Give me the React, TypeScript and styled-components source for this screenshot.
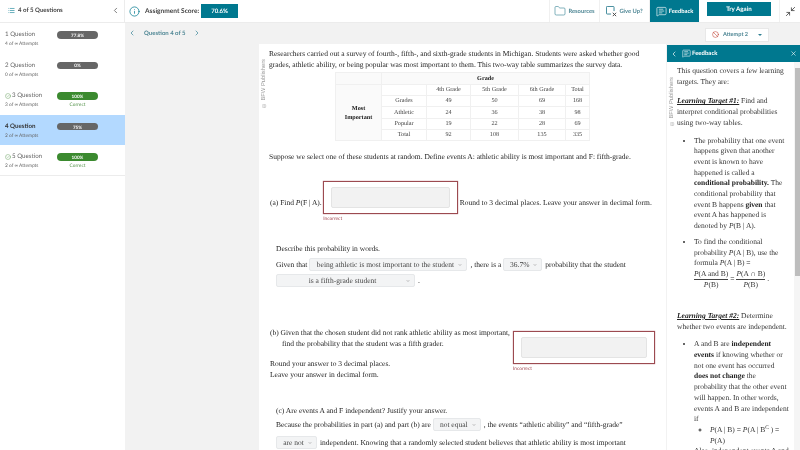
import React from 'react';
import styled, { createGlobalStyle } from 'styled-components';
import {
  List,
  ChevronLeft,
  ChevronRight,
  ChevronDown,
  Info,
  Folder,
  X,
  MessageSquareText,
  CircleCheck,
  Ban,
  Minimize2,
} from 'lucide-react';

const TEAL = '#00788f';
const SERIF = '"Liberation Serif", serif';
const SANS = 'Lato, sans-serif';

const GlobalStyle = createGlobalStyle`
  html, body {
    margin: 0;
    padding: 0;
    background: #f2f2f2;
    text-rendering: geometricPrecision;
  }
`;

const questions = [
  { name: '1 Question', attempts: '4 of ∞ Attempts', score: '77.8%' },
  { name: '2 Question', attempts: '0 of ∞ Attempts', score: '0%' },
  { name: '3 Question', attempts: '3 of ∞ Attempts', score: '100%', correct: true },
  { name: '4 Question', attempts: '2 of ∞ Attempts', score: '75%', active: true },
  { name: '5 Question', attempts: '2 of ∞ Attempts', score: '100%', correct: true },
];

const tableRows = [
  ['Grades', '49', '50', '69', '168'],
  ['Athletic', '24', '36', '38', '98'],
  ['Popular', '19', '22', '28', '69'],
  ['Total', '92', '108', '135', '335'],
];

const columnWidths = [46, 45, 44, 48, 47, 24];

const GiveUpIcon = () => (
  <svg width='11' height='11' viewBox='0 0 13 13' fill='none' stroke='#2f7f92' strokeWidth='1.1'>
    <path d='M6 9.5H1.5a1 1 0 0 1-1-1V1.5a1 1 0 0 1 1-1h7a1 1 0 0 1 1 1V6' />
    <path d='M8 8l4 4M12 8l-4 4' stroke='#444' />
  </svg>
);

const App = () => {
  return (
    <Page>
      <GlobalStyle />
      <TopBar>
        <SideHead>
          <List size={7} color={TEAL} strokeWidth={2} />
          <SideTitle>4 of 5 Questions</SideTitle>
          <ChevronLeft size={9} color='#555' />
        </SideHead>
        <ScoreArea>
          <Info size={11} color={TEAL} strokeWidth={1.6} />
          <ScoreLabel>Assignment Score:</ScoreLabel>
          <ScoreBox>70.6%</ScoreBox>
        </ScoreArea>
        <ToolButton>
          <Folder size={12} color='#2f7f92' strokeWidth={1.2} />
          Resources
        </ToolButton>
        <ToolButton>
          <GiveUpIcon />
          Give Up?
        </ToolButton>
        <ToolButton $active>
          <MessageSquareText size={11} color='#fff' strokeWidth={1.4} />
          Feedback
        </ToolButton>
        <TryAgain>Try Again</TryAgain>
        <ExpandBox>
          <Minimize2 size={11} color='#444' strokeWidth={1.8} />
        </ExpandBox>
      </TopBar>
      <Body>
        <Sidebar>
          {questions.map((q) => (
            <QuestionRow key={q.name} $active={q.active}>
              <div>
                <QuestionName $active={q.active}>
                  {q.correct && <CircleCheck size={6} color='#4f8f45' strokeWidth={1.6} />}
                  {q.name}
                </QuestionName>
                <Attempts>{q.attempts}</Attempts>
              </div>
              <div>
                <ScoreBar $correct={q.correct}>{q.score}</ScoreBar>
                {q.correct && <CorrectLabel>Correct</CorrectLabel>}
              </div>
            </QuestionRow>
          ))}
        </Sidebar>
        <Main>
          <SubBar>
            <Pager>
              <ChevronLeft size={8} color='#2f7f92' />
              <span>Question 4 of 5</span>
              <ChevronRight size={8} color='#2f7f92' />
            </Pager>
            <AttemptButton>
              <Ban size={7} color='#c0392b' strokeWidth={1.8} />
              <span>Attempt 2</span>
              <Caret />
            </AttemptButton>
          </SubBar>
          <ContentRow>
            <Card>
              <Publisher>© BFW Publishers</Publisher>
              <Intro>
                Researchers carried out a survey of fourth-, fifth-, and sixth-grade students in
                Michigan. Students were asked whether good grades, athletic ability, or being popular
                was most important to them. This two-way table summarizes the survey data.
              </Intro>
              <SurveyTable>
                <colgroup>
                  {columnWidths.map((w, i) => (
                    <col key={i} width={w} />
                  ))}
                </colgroup>
                <tbody>
                  <tr>
                    <HeadCell />
                    <HeadCell colSpan={5}>Grade</HeadCell>
                  </tr>
                  <tr>
                    <SideCell rowSpan={5}>
                      Most
                      <br />
                      Important
                    </SideCell>
                    <Cell />
                    <Cell>4th Grade</Cell>
                    <Cell>5th Grade</Cell>
                    <Cell>6th Grade</Cell>
                    <Cell>Total</Cell>
                  </tr>
                  {tableRows.map((row) => (
                    <tr key={row[0]}>
                      {row.map((value, i) => (
                        <Cell key={i}>{value}</Cell>
                      ))}
                    </tr>
                  ))}
                </tbody>
              </SurveyTable>
              <Suppose>
                Suppose we select one of these students at random. Define events A: athletic ability
                is most important and F: fifth-grade.
              </Suppose>
              <PartA>
                <PartAText>
                  (a) Find <i>P</i>(F | A).
                </PartAText>
                <AnswerBox $width={135}>
                  <AnswerInput />
                  <Incorrect>Incorrect</Incorrect>
                </AnswerBox>
                <PartAText>Round to 3 decimal places. Leave your answer in decimal form.</PartAText>
              </PartA>
              <Describe>Describe this probability in words.</Describe>
              <SentenceLine $top={4}>
                Given that
                <Dropdown $width={158}>being athletic is most important to the student</Dropdown>
                , there is a
                <Dropdown $width={39}>36.7%</Dropdown>
                probability that the student
              </SentenceLine>
              <SentenceLine $top={3}>
                <Dropdown $width={139} $first>
                  is a fifth-grade student
                </Dropdown>
                .
              </SentenceLine>
              <PartB>
                <PartBText>
                  <div>(b) Given that the chosen student did not rank athletic ability as most important,</div>
                  <Indented>find the probability that the student was a fifth grader.</Indented>
                  <RoundNote>
                    Round your answer to 3 decimal places.
                    <br />
                    Leave your answer in decimal form.
                  </RoundNote>
                </PartBText>
                <PartBAnswer>
                  <AnswerBox $width={142}>
                    <AnswerInput />
                    <Incorrect>Incorrect</Incorrect>
                  </AnswerBox>
                </PartBAnswer>
              </PartB>
              <PartC>(c) Are events A and F independent? Justify your answer.</PartC>
              <SentenceLine $top={2}>
                Because the probabilities in part (a) and part (b) are
                <Dropdown $width={48}>not equal</Dropdown>
                , the events “athletic ability” and “fifth-grade”
              </SentenceLine>
              <SentenceLine $top={5}>
                <Dropdown $width={41} $first>
                  are not
                </Dropdown>
                independent. Knowing that a randomly selected student believes that athletic ability
                is most important
              </SentenceLine>
            </Card>
            <FeedbackPanel>
              <FeedbackHead>
                <ChevronLeft size={8} color='#fff' />
                <MessageSquareText size={9} color='#fff' strokeWidth={1.5} />
                <FeedbackTitle>Feedback</FeedbackTitle>
                <X size={7} color='#fff' strokeWidth={2} />
              </FeedbackHead>
              <FeedbackBody>
                <PanelPublisher>© BFW Publishers</PanelPublisher>
                <Scrollbar>
                  <ScrollThumb />
                </Scrollbar>
                <FeedbackText>This question covers a few learning targets. They are:</FeedbackText>
                <TargetText>
                  <TargetName>Learning Target #1:</TargetName> Find and interpret conditional
                  probabilities using two-way tables.
                </TargetText>
                <BulletList>
                  <li>
                    The probability that one event happens given that another event is known to have
                    happened is called a <b>conditional probability.</b> The conditional probability
                    that event B happens <b>given</b> that event A has happened is denoted by{' '}
                    <i>P</i>(B | A).
                  </li>
                  <li>
                    To find the conditional probability <i>P</i>(A | B), use the formula{' '}
                    <i>P</i>(A | B) ={' '}
                    <FormulaLine>
                      <Fraction>
                        <Numerator>
                          <i>P</i>(A and B)
                        </Numerator>
                        <span>
                          <i>P</i>(B)
                        </span>
                      </Fraction>
                      =
                      <Fraction>
                        <Numerator>
                          <i>P</i>(A ∩ B)
                        </Numerator>
                        <span>
                          <i>P</i>(B)
                        </span>
                      </Fraction>
                      .
                    </FormulaLine>
                  </li>
                </BulletList>
                <SecondTarget>
                  <TargetName>Learning Target #2:</TargetName> Determine whether two events are
                  independent.
                </SecondTarget>
                <BulletList>
                  <li>
                    A and B are <b>independent events</b> if knowing whether or not one event has
                    occurred <b>does not change</b> the probability that the other event will happen.
                    In other words, events A and B are independent if
                    <NestedList>
                      <li>
                        <i>P</i>(A | B) = <i>P</i>(A | B<sup>C</sup> ) = <i>P</i>(A)
                      </li>
                    </NestedList>
                    Also, independent events A and B
                  </li>
                </BulletList>
              </FeedbackBody>
            </FeedbackPanel>
          </ContentRow>
        </Main>
      </Body>
    </Page>
  );
};

export default App;

const Page = styled.div`
  width: 800px;
  height: 450px;
  overflow: hidden;
  display: flex;
  flex-direction: column;
  background: #f2f2f2;
  font-family: ${SANS};
  color: #333;
  will-change: transform;
`;

const TopBar = styled.div`
  height: 23px;
  flex: none;
  display: flex;
  align-items: stretch;
  background: #fff;
  border-bottom: 1px solid #ececec;
  box-sizing: border-box;
`;

const SideHead = styled.div`
  width: 125px;
  flex: none;
  display: flex;
  align-items: center;
  padding: 0 4px 1px 8px;
  box-sizing: border-box;
  gap: 3px;
  border-right: 1px solid #ececec;
`;

const SideTitle = styled.span`
  flex: 1;
  font-size: 6.1px;
  font-weight: 700;
  color: #444;
`;

const ScoreArea = styled.div`
  flex: 1;
  display: flex;
  align-items: center;
  padding-left: 4px;
`;

const ScoreLabel = styled.span`
  margin-left: 5px;
  font-size: 6.6px;
  font-weight: 700;
  color: #444;
`;

const ScoreBox = styled.div`
  margin-left: 2px;
  width: 37px;
  height: 14px;
  background: ${TEAL};
  color: #fff;
  font-size: 6px;
  font-weight: 700;
  display: flex;
  align-items: center;
  justify-content: center;
`;

const ToolButton = styled.div<{ $active?: boolean }>`
  width: 50px;
  flex: none;
  display: flex;
  align-items: center;
  justify-content: center;
  gap: 2px;
  box-sizing: border-box;
  font-size: 5.8px;
  font-weight: 700;
  color: ${(p) => (p.$active ? '#fff' : '#4f8795')};
  background: ${(p) => (p.$active ? TEAL : '#fff')};
  border-left: 1px solid #f0f0f0;
`;

const TryAgain = styled.div`
  width: 64px;
  height: 14px;
  margin: 2px 8px 0 8px;
  flex: none;
  background: ${TEAL};
  color: #fff;
  font-size: 6.2px;
  font-weight: 700;
  display: flex;
  align-items: center;
  justify-content: center;
`;

const ExpandBox = styled.div`
  width: 21px;
  flex: none;
  box-sizing: border-box;
  display: flex;
  align-items: center;
  justify-content: center;
  border-left: 1px solid #f0f0f0;
`;

const Body = styled.div`
  flex: 1;
  min-height: 0;
  display: flex;
`;

const Sidebar = styled.div`
  width: 125px;
  flex: none;
  background: #fff;
`;

const QuestionRow = styled.div<{ $active?: boolean }>`
  height: 30.6px;
  box-sizing: border-box;
  padding: 8px 27px 0 5px;
  display: grid;
  grid-template-columns: 52px 41px;
  background: ${(p) => (p.$active ? '#b3d9ff' : '#fff')};
  &:last-child {
    border-bottom: 1px solid #ececec;
  }
`;

const QuestionName = styled.div<{ $active?: boolean }>`
  display: flex;
  align-items: center;
  gap: 1px;
  height: 7px;
  font-size: 6.2px;
  font-weight: ${(p) => (p.$active ? 700 : 400)};
  color: ${(p) => (p.$active ? '#333' : '#666')};
`;

const Attempts = styled.div`
  margin-top: 3px;
  font-size: 4.8px;
  line-height: 6px;
  color: #666;
`;

const ScoreBar = styled.div<{ $correct?: boolean }>`
  height: 7.5px;
  border-radius: 4px;
  background: ${(p) => (p.$correct ? '#3b8a2f' : '#666')};
  color: #fff;
  font-size: 4.6px;
  font-weight: 700;
  display: flex;
  align-items: center;
  justify-content: center;
`;

const CorrectLabel = styled.div`
  margin-top: 2px;
  text-align: center;
  font-size: 4.8px;
  line-height: 6px;
  color: #4f8f45;
`;

const Main = styled.div`
  flex: 1;
  min-width: 0;
  display: flex;
  flex-direction: column;
`;

const SubBar = styled.div`
  height: 21px;
  flex: none;
  display: flex;
  align-items: center;
  justify-content: space-between;
  padding: 0 31px 0 4px;
`;

const Pager = styled.div`
  display: flex;
  align-items: center;
  gap: 8px;
  font-size: 6px;
  font-weight: 700;
  color: #4f8795;
  margin-top: -1px;
  margin-left: -1px;
`;

const AttemptButton = styled.div`
  width: 64px;
  height: 14px;
  box-sizing: border-box;
  background: #fff;
  border: 1px solid #e8e8e8;
  display: flex;
  align-items: center;
  padding: 0 6px;
  gap: 4px;
  font-size: 5.6px;
  font-weight: 700;
  color: #4f8795;
  margin-top: 2px;
`;

const Caret = styled.span`
  margin-left: auto;
  width: 0;
  height: 0;
  border-left: 2px solid transparent;
  border-right: 2px solid transparent;
  border-top: 2.5px solid #2f7f92;
`;

const ContentRow = styled.div`
  flex: 1;
  min-height: 0;
  display: flex;
  padding-left: 134px;
  gap: 1px;
`;

const Card = styled.div`
  position: relative;
  width: 407px;
  flex: none;
  box-sizing: border-box;
  background: #fff;
  padding: 4px 4px 0 10px;
  overflow: hidden;
  font-family: ${SERIF};
  font-size: 7.5px;
  line-height: 11px;
  color: #222;
`;

const Publisher = styled.div`
  position: absolute;
  left: 2px;
  top: 15px;
  writing-mode: vertical-rl;
  transform: rotate(180deg);
  font-family: "Liberation Sans", sans-serif;
  font-size: 5.8px;
  line-height: 6px;
  color: #999;
`;

const Intro = styled.p`
  margin: 0;
  line-height: 11.2px;
`;

const SurveyTable = styled.table`
  margin: 2px 0 0 66px;
  width: 254px;
  height: 69px;
  border-collapse: collapse;
  table-layout: fixed;
  font-size: 6.2px;
  line-height: 8px;
  text-align: center;
  color: #444;
`;

const Cell = styled.td`
  border: 1px solid #f0f0f0;
  padding: 0;
  height: 10px;
`;

const HeadCell = styled.td`
  border: 1px solid #f0f0f0;
  padding: 0;
  height: 10px;
  background: #fafafa;
  font-weight: 700;
  color: #222;
`;

const SideCell = styled.td`
  border: 1px solid #f0f0f0;
  padding: 0;
  background: #fafafa;
  font-weight: 700;
  color: #222;
  line-height: 9px;
`;

const Suppose = styled.p`
  margin: 10px 0 0;
`;

const PartA = styled.div`
  margin: 19px 0 0 1px;
  display: flex;
  align-items: center;
  gap: 1.5px;
  white-space: nowrap;
`;

const PartAText = styled.span`
  padding-top: 9px;
`;

const AnswerBox = styled.div<{ $width: number }>`
  position: relative;
  width: ${(p) => p.$width}px;
  height: 33px;
  flex: none;
  box-sizing: border-box;
  border: 1px solid #9c4a50;
  box-shadow: 0 0 1px rgba(160, 70, 80, 0.8);
  display: flex;
  align-items: center;
  justify-content: center;
  padding: 0 7px;
`;

const AnswerInput = styled.div`
  flex: 1;
  height: 19px;
  background: #f2f2f2;
  border: 1px solid #e4e4e4;
  border-radius: 2px;
`;

const Incorrect = styled.div`
  position: absolute;
  left: -1px;
  top: 100%;
  margin-top: 3px;
  font-family: ${SANS};
  font-size: 4.8px;
  line-height: 6px;
  color: #a0454f;
`;

const Describe = styled.div`
  margin: 29px 0 0 7px;
`;

const SentenceLine = styled.div<{ $top: number }>`
  margin: ${(p) => p.$top}px 0 0 7px;
  display: flex;
  align-items: center;
  white-space: nowrap;
  height: 13px;
`;

const Dropdown = styled(({ children, className }: React.PropsWithChildren<{ className?: string }>) => (
  <span className={className}>
    <DropdownLabel>{children}</DropdownLabel>
    <ChevronDown size={4} color='#666' strokeWidth={2.5} />
  </span>
))<{ $width: number; $first?: boolean }>`
  width: ${(p) => p.$width}px;
  height: 13px;
  flex: none;
  box-sizing: border-box;
  margin: ${(p) => (p.$first ? '0 3px 0 0' : '0 3px 0 2px')};
  padding: 0 4px 0 2px;
  display: inline-flex;
  align-items: center;
  background: #f3f4f5;
  border: 1px solid #e6e8ea;
  border-radius: 2px;
  color: #444;
`;

const DropdownLabel = styled.span`
  flex: 1;
  text-align: center;
`;

const PartB = styled.div`
  margin: 40px 0 0 1px;
  display: flex;
  white-space: nowrap;
`;

const PartBText = styled.div`
  width: 241px;
  flex: none;
`;

const Indented = styled.div`
  padding-left: 12px;
`;

const RoundNote = styled.div`
  margin-top: 9px;
`;

const PartBAnswer = styled.div`
  padding-top: 4px;
  margin-left: 2px;
`;

const PartC = styled.div`
  margin: 25px 0 0 7px;
`;

const FeedbackPanel = styled.div`
  flex: 1;
  min-width: 0;
  margin-top: 1px;
  display: flex;
  flex-direction: column;
  background: #fff;
`;

const FeedbackHead = styled.div`
  height: 17px;
  flex: none;
  background: ${TEAL};
  display: flex;
  align-items: center;
  padding: 0 3px 0 3px;
  gap: 4px;
`;

const FeedbackTitle = styled.span`
  flex: 1;
  margin-left: -3px;
  font-size: 6px;
  font-weight: 700;
  color: #fff;
`;

const FeedbackBody = styled.div`
  position: relative;
  flex: 1;
  min-height: 0;
  overflow: hidden;
  padding: 4px 7px 0 10px;
  font-family: ${SERIF};
  font-size: 7.5px;
  line-height: 10.7px;
  color: #333;
  b {
    color: #222;
  }
`;

const PanelPublisher = styled.div`
  position: absolute;
  left: 2px;
  top: 15px;
  writing-mode: vertical-rl;
  transform: rotate(180deg);
  font-family: "Liberation Sans", sans-serif;
  font-size: 5.8px;
  line-height: 6px;
  color: #999;
`;

const Scrollbar = styled.div`
  position: absolute;
  right: 0;
  top: 0;
  bottom: 0;
  width: 6px;
  background: #f5f5f5;
`;

const ScrollThumb = styled.div`
  margin: 6px 0 0 1px;
  width: 5px;
  height: 208px;
  background: #bdbdbd;
`;

const FeedbackText = styled.p`
  margin: 0;
`;

const TargetName = styled.span`
  font-weight: 700;
  font-style: italic;
  text-decoration: underline;
  color: #222;
`;

const TargetText = styled.p`
  margin: 9px 0 0;
`;

const SecondTarget = styled.p`
  margin: 21px 0 0;
`;

const BulletList = styled.ul`
  margin: 7px 0 0;
  padding: 0 3px 0 17px;
  li + li {
    margin-top: 5px;
  }
`;

const NestedList = styled.ul`
  margin: 0;
  padding: 0 0 0 16px;
  list-style: circle;
  sup {
    font-size: 5.5px;
    line-height: 0;
  }
`;

const FormulaLine = styled.span`
  display: inline-flex;
  align-items: center;
  gap: 2px;
  white-space: nowrap;
  vertical-align: middle;
`;

const Fraction = styled.span`
  display: inline-flex;
  flex-direction: column;
  align-items: center;
  line-height: 10px;
`;

const Numerator = styled.span`
  border-bottom: 1px solid #444;
`;
